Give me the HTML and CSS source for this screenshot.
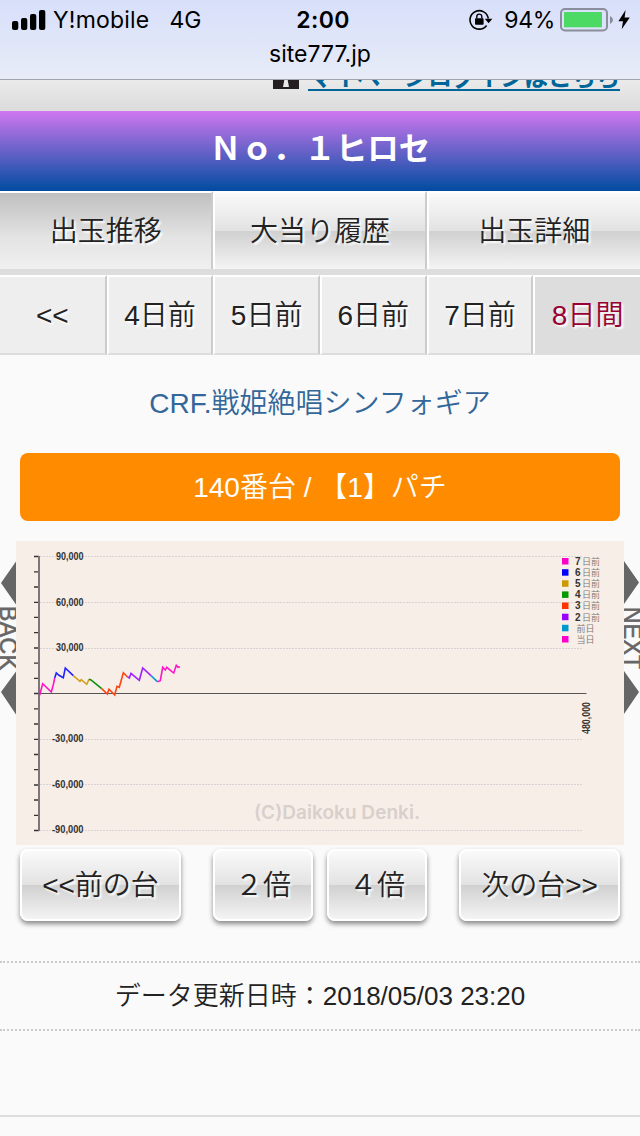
FILE: index.html
```html
<!DOCTYPE html>
<html lang="ja">
<head>
  <meta charset="UTF-8">
  <meta name="viewport" content="width=device-width, initial-scale=1">
  <title>site777.jp</title>
  <link rel="stylesheet" href="styles.css">
</head>
<body>

<div class="status">
  <div class="status-row">
    <div class="status-left">
      <svg class="signal" width="34" height="20" viewBox="0 0 34 20">
        <rect x="0" y="11" width="6.3" height="9" rx="2"/>
        <rect x="9" y="8" width="6.3" height="12" rx="2"/>
        <rect x="18" y="4" width="6.3" height="16" rx="2"/>
        <rect x="27" y="0" width="6.3" height="20" rx="2"/>
      </svg>
      <span class="carrier">Y!mobile</span>
      <span class="network">4G</span>
    </div>
    <div class="clock">2:00</div>
    <div class="status-right">
      <svg class="lock" width="24" height="22" viewBox="0 0 24 22">
        <path d="M17.6 16.4A9.2 9.2 0 1 1 19.3 9.5" fill="none" stroke="#000" stroke-width="1.6"/>
        <path d="M15.8 9.8h7.6l-3.8 4.4z"/>
        <rect x="6" y="9.2" width="8.6" height="6.6" rx="0.8"/>
        <path d="M7.8 9.5V7.6a2.5 2.5 0 0 1 5 0v1.9" fill="none" stroke="#000" stroke-width="1.4"/>
      </svg>
      <span class="percent">94%</span>
      <svg class="battery" width="54" height="24" viewBox="0 0 54 24">
        <rect x="1" y="1" width="46" height="21.5" rx="4" fill="none" stroke="#8a8d9b" stroke-width="2"/>
        <rect x="4" y="4" width="38" height="15.3" fill="#4cd964"/>
        <path d="M50 8v8q3-1.5 3-4t-3-4z" fill="#8a8d9b"/>
      </svg>
      <svg class="bolt" width="12" height="20" viewBox="0 0 12 20">
        <path d="M7.6 0L0.4 11.2H5L3.7 19.2L11.8 7.6H6.6z"/>
      </svg>
    </div>
  </div>
  <div class="url">site777.jp</div>
</div>

<div class="login">
  <svg class="login-lock" width="26" height="26" viewBox="0 0 26 26">
    <rect width="26" height="26" fill="#231f20"/>
    <path d="M13 9a4 4 0 0 1 1.6 7.4L16 24h-6l1.4-7.6A4 4 0 0 1 13 9z" fill="#e8e8e8"/>
  </svg>
  <a class="login-link" href="#">マイページログインはこちら</a>
</div>

<h1 class="hall">Ｎｏ．１ヒロセ</h1>

<nav class="tabs">
  <a class="tab active" href="#">出玉推移</a>
  <a class="tab" href="#">大当り履歴</a>
  <a class="tab" href="#">出玉詳細</a>
</nav>

<nav class="days">
  <a class="day" href="#">&lt;&lt;</a>
  <a class="day" href="#">4日前</a>
  <a class="day" href="#">5日前</a>
  <a class="day" href="#">6日前</a>
  <a class="day" href="#">7日前</a>
  <a class="day active" href="#">8日間</a>
</nav>

<a class="machine" href="#">CRF.戦姫絶唱シンフォギア</a>
<div class="number">140番台 / 【1】パチ</div>

<div class="slider">
  <svg class="side" width="16" height="304" viewBox="0 0 16 304">
    <path d="M16 20.5v43L1 42zM16 130.5v43L1 151z"/>
    <text class="side-text" transform="translate(0 65) rotate(90)" textLength="64">BACK</text>
  </svg>

  <svg class="chart" width="608" height="304" viewBox="0 0 608 304">
    <!-- grid -->
    <path class="grid" d="M24 15.5H566M24 61.5H566M24 107.5H566M24 198.5H566M24 243.5H566M24 289.5H566"/>
    <!-- axes -->
    <path class="ticks" d="M18 15.5h5M18 30.8h5M18 46h5M18 61.3h5M18 76.4h5M18 91.6h5M18 107h5M18 122.2h5M18 137.3h5M18 152.5h5M18 167.8h5M18 183h5M18 198.4h5M18 213.5h5M18 228.6h5M18 244h5M18 259h5M18 274.3h5M18 289.5h5"/>
    <path class="axis-y" d="M23 15V290"/>
    <path class="axis-x" d="M22 152.5H570.5"/>
    <g class="labels">
      <text x="40" y="18.5" textLength="27.5" lengthAdjust="spacingAndGlyphs">90,000</text>
      <text x="40" y="64.5" textLength="27.5" lengthAdjust="spacingAndGlyphs">60,000</text>
      <text x="40" y="110" textLength="27.5" lengthAdjust="spacingAndGlyphs">30,000</text>
      <text x="36" y="201" textLength="31.5" lengthAdjust="spacingAndGlyphs">-30,000</text>
      <text x="36" y="246.5" textLength="31.5" lengthAdjust="spacingAndGlyphs">-60,000</text>
      <text x="36" y="292" textLength="31.5" lengthAdjust="spacingAndGlyphs">-90,000</text>
      <text transform="translate(573.5 193) rotate(-90)" textLength="32" lengthAdjust="spacingAndGlyphs">480,000</text>
    </g>
    <!-- 8 days -->
    <g class="lines">
      <path stroke="#ff14c8" d="M23.5 154.5L26.7 142.7L35.3 151L37.5 143L38.7 137"/>
      <path stroke="#2222ff" d="M38.7 137L40.3 132L43 134.3L47.3 136.7L49.3 127L57.3 134.7"/>
      <path stroke="#d0a020" d="M57.3 134.7L64 140.3L65.3 138.7L70.7 143.3L73 138.3"/>
      <path stroke="#0a930a" d="M73 138.3L75 139L85.7 147.7"/>
      <path stroke="#ff4411" d="M85.7 147.7L91.3 153L93 148.3L98.7 154L101 145.3L103.3 146.3L107.3 131.7L111.3 135.7"/>
      <path stroke="#a020ff" d="M111.3 135.7L113.3 137L115 132.3L123.3 139.3L126.7 127L135 134.7"/>
      <path stroke="#1199cc" d="M135 134.7L141.3 140.7"/>
      <path stroke="#ff14c8" d="M141.3 140.7L144.3 139.7L146.7 126.3L149.3 129L150.7 126.3L157.7 132L160.3 124.3L162 126.3L164 125.7"/>
    </g>
    <!-- legend -->
    <g>
      <rect x="546" y="17" width="6.5" height="6.5" fill="#ff00cc"/>
      <rect x="546" y="28.2" width="6.5" height="6.5" fill="#0000ff"/>
      <rect x="546" y="39.3" width="6.5" height="6.5" fill="#cc9900"/>
      <rect x="546" y="50.4" width="6.5" height="6.5" fill="#009900"/>
      <rect x="546" y="61.5" width="6.5" height="6.5" fill="#ff3300"/>
      <rect x="546" y="72.7" width="6.5" height="6.5" fill="#9900ff"/>
      <rect x="546" y="83.8" width="6.5" height="6.5" fill="#0099cc"/>
      <rect x="546" y="95" width="6.5" height="6.5" fill="#ff00cc"/>
    </g>
    <g class="legend">
      <text x="559" y="24"><tspan class="num">7</tspan><tspan x="566">日前</tspan></text>
      <text x="559" y="35.1"><tspan class="num">6</tspan><tspan x="566">日前</tspan></text>
      <text x="559" y="46.2"><tspan class="num">5</tspan><tspan x="566">日前</tspan></text>
      <text x="559" y="57.3"><tspan class="num">4</tspan><tspan x="566">日前</tspan></text>
      <text x="559" y="68.4"><tspan class="num">3</tspan><tspan x="566">日前</tspan></text>
      <text x="559" y="79.6"><tspan class="num">2</tspan><tspan x="566">日前</tspan></text>
      <text x="560.5" y="90.7">前日</text>
      <text x="560.5" y="101.8">当日</text>
    </g>
    <text class="copy" x="238" y="278" textLength="166">(C)Daikoku Denki.</text>
  </svg>

  <svg class="side" width="16" height="304" viewBox="0 0 16 304">
    <path d="M0 20v43L15 41.5zM0 130v43L15 151z"/>
    <text class="side-text" transform="translate(0 66) rotate(90)" textLength="62">NEXT</text>
  </svg>
</div>

<div class="buttons">
  <a class="btn wide" href="#">&lt;&lt;前の台</a>
  <div class="zoom">
    <a class="btn" href="#">２倍</a>
    <a class="btn" href="#">４倍</a>
  </div>
  <a class="btn wide" href="#">次の台&gt;&gt;</a>
</div>

<div class="updated">データ更新日時：2018/05/03 23:20</div>
<div class="footer"></div>

</body>
</html>
```

FILE: styles.css
```css
* {
  box-sizing: border-box;
}
body {
  margin: 0;
  background: #fafafa;
  color: #222;
  font-family: "Liberation Sans", "Noto Sans CJK JP", sans-serif;
  font-size: 28px;
  font-weight: 350;
  overflow-x: hidden;
}
a {
  color: inherit;
  text-decoration: none;
}
svg {
  display: block;
}

/* status bar */
.status {
  height: 80px;
  background: linear-gradient(#d8dffa, #e7ecf7);
  border-bottom: 1px solid #a2a5ad;
  color: #000;
  font-family: Inter, sans-serif;
  font-weight: 400;
}
.status-row {
  display: grid;
  grid-template-columns: 1fr auto 1fr;
  height: 40px;
  padding: 0 10px 0 12px;
  font-size: 23px;
  line-height: 40px;
}
.status-left,
.status-right {
  display: flex;
  align-items: center;
}
.status-right {
  justify-content: flex-end;
}
.carrier {
  margin-left: 7px;
  letter-spacing: 0.2px;
}
.network {
  margin-left: 20px;
}
.clock {
  padding-left: 4px;
  font-weight: 600;
  letter-spacing: 0.4px;
}
.lock {
  margin-right: 11px;
}
.percent {
  margin-right: 5px;
  letter-spacing: -0.3px;
}
.bolt {
  margin-left: 4px;
}
.url {
  text-align: center;
  font-size: 23px;
  line-height: 28px;
}

/* login */
.login {
  display: flex;
  justify-content: flex-end;
  height: 31px;
  padding-right: 20px;
  background: linear-gradient(#eaeaea, #dcdcdc);
  overflow: hidden;
}
.login-lock {
  margin: -17px 9px 0 0;
}
.login-link {
  margin-top: -22px;
  color: #006699;
  font-size: 24px;
  font-weight: bold;
  line-height: 40px;
  height: 33px;
  border-bottom: 2px solid #006699;
}

.hall {
  margin: 0;
  height: 80px;
  background: linear-gradient(#d077f0, #004ca0);
  color: #fff;
  font-size: 31.5px;
  font-weight: 700;
  line-height: 77px;
  text-align: center;
}

/* tabs */
.tabs {
  display: grid;
  grid-template-columns: repeat(3, 1fr);
  grid-template-rows: 78px;
  height: 84px;
  border-bottom: 6px solid #ddd;
}
.tab {
  border-top: 2px solid #fff;
  border-right: 2px solid #ccc;
  border-left: 2px solid #fff;
  background: linear-gradient(#fafafa, #e2e2e2 50%, #d0d0d0 50%, #f4f4f4);
  line-height: 78px;
  text-align: center;
  text-shadow: 2px 2px 2px #fff;
}
.tab.active {
  background: linear-gradient(#c0c0c0, #e4e4e4 60%, #f0f0f0);
}
.days {
  display: grid;
  grid-template-columns: repeat(6, 1fr);
  grid-template-rows: 80px;
}
.day {
  border: 2px solid #fff;
  border-right-color: #ccc;
  border-bottom-color: #ddd;
  background: #eee;
  line-height: 78px;
  text-align: center;
  text-shadow: 2px 2px 2px #fff;
}
.day.active {
  background: #ddd;
  color: #990033;
}
.tab:first-child,
.day:first-child {
  border-left: 0;
}
.tab:last-child,
.day:last-child {
  border-right: 0;
}

.machine {
  display: block;
  height: 98px;
  color: #336699;
  line-height: 97px;
  text-align: center;
}
.number {
  height: 68px;
  margin: 0 20px 20px;
  border-radius: 8px;
  background: #ff8c00;
  color: #fff;
  line-height: 69px;
  text-align: center;
}

/* chart */
.slider {
  display: flex;
}
.side {
  fill: #666;
}
.side-text {
  font-size: 23px;
  stroke: #666;
  stroke-width: 0.6;
}
.chart {
  background: #f7eee8;
}
.grid {
  stroke: #d9d2d2;
  stroke-dasharray: 2 1;
}
.ticks {
  stroke: #333;
  stroke-width: 1.3;
}
.axis-y {
  stroke: #7d7777;
  stroke-width: 2;
}
.axis-x {
  stroke: #555;
  stroke-width: 1.2;
}
.labels {
  fill: #333;
  font-size: 10px;
  font-weight: bold;
}
.lines {
  fill: none;
  stroke-width: 1.6;
}
.legend {
  fill: #777;
  font-size: 9px;
}
.num {
  fill: #333;
  font-size: 10px;
  font-weight: bold;
}
.copy {
  fill: #d9cfcb;
  font-family: Inter, sans-serif;
  font-size: 19px;
  font-weight: 600;
}

/* buttons */
.buttons {
  display: flex;
  justify-content: space-between;
  padding: 4px 20px 40px;
}
.zoom {
  display: flex;
  gap: 14px;
}
.btn {
  width: 100px;
  height: 72px;
  border: 2px solid #fff;
  border-radius: 8px;
  background: linear-gradient(#fafafa, #e2e2e2 50%, #d0d0d0 50%, #f4f4f4);
  box-shadow: 0 3px 5px rgba(0, 0, 0, 0.45);
  line-height: 70px;
  text-align: center;
  text-shadow: 2px 2px 2px #fff;
}
.btn.wide {
  width: 161px;
}

.updated {
  height: 70px;
  border-top: 2px dotted #ccc;
  border-bottom: 2px dotted #ccc;
  font-size: 26px;
  line-height: 66px;
  text-align: center;
}
.footer {
  height: 86px;
  border-bottom: 2px solid #ddd;
}
```
